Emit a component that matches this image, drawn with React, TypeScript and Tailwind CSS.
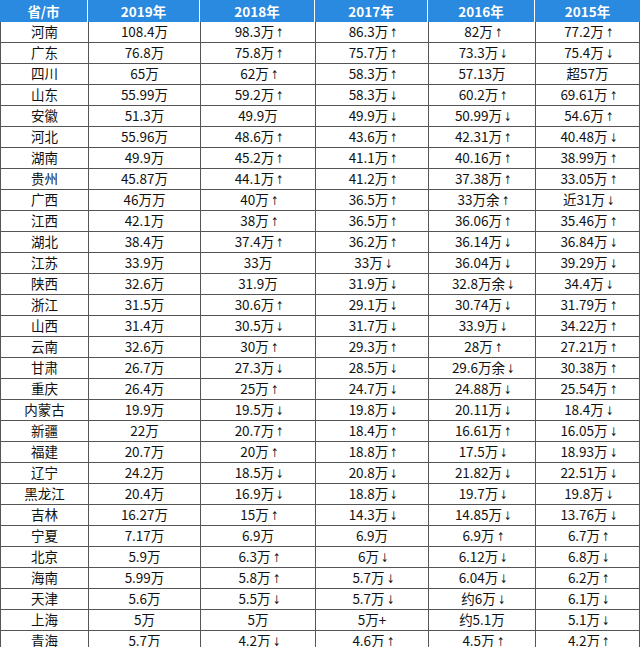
import React from "react";

const years = ["2019年", "2018年", "2017年", "2016年", "2015年"];

const rows: string[][] = [
  ["河南", "108.4万", "98.3万↑", "86.3万↑", "82万↑", "77.2万↑"],
  ["广东", "76.8万", "75.8万↑", "75.7万↑", "73.3万↓", "75.4万↓"],
  ["四川", "65万", "62万↑", "58.3万↑", "57.13万", "超57万"],
  ["山东", "55.99万", "59.2万↑", "58.3万↓", "60.2万↑", "69.61万↑"],
  ["安徽", "51.3万", "49.9万", "49.9万↓", "50.99万↓", "54.6万↑"],
  ["河北", "55.96万", "48.6万↑", "43.6万↑", "42.31万↑", "40.48万↓"],
  ["湖南", "49.9万", "45.2万↑", "41.1万↑", "40.16万↑", "38.99万↑"],
  ["贵州", "45.87万", "44.1万↑", "41.2万↑", "37.38万↑", "33.05万↑"],
  ["广西", "46万万", "40万↑", "36.5万↑", "33万余↑", "近31万↓"],
  ["江西", "42.1万", "38万↑", "36.5万↑", "36.06万↑", "35.46万↑"],
  ["湖北", "38.4万", "37.4万↑", "36.2万↑", "36.14万↓", "36.84万↓"],
  ["江苏", "33.9万", "33万", "33万↓", "36.04万↓", "39.29万↓"],
  ["陕西", "32.6万", "31.9万", "31.9万↓", "32.8万余↓", "34.4万↓"],
  ["浙江", "31.5万", "30.6万↑", "29.1万↓", "30.74万↓", "31.79万↑"],
  ["山西", "31.4万", "30.5万↓", "31.7万↓", "33.9万↓", "34.22万↑"],
  ["云南", "32.6万", "30万↑", "29.3万↑", "28万↑", "27.21万↑"],
  ["甘肃", "26.7万", "27.3万↓", "28.5万↓", "29.6万余↓", "30.38万↑"],
  ["重庆", "26.4万", "25万↑", "24.7万↓", "24.88万↓", "25.54万↑"],
  ["内蒙古", "19.9万", "19.5万↓", "19.8万↓", "20.11万↓", "18.4万↓"],
  ["新疆", "22万", "20.7万↑", "18.4万↑", "16.61万↑", "16.05万↓"],
  ["福建", "20.7万", "20万↑", "18.8万↑", "17.5万↓", "18.93万↓"],
  ["辽宁", "24.2万", "18.5万↓", "20.8万↓", "21.82万↓", "22.51万↓"],
  ["黑龙江", "20.4万", "16.9万↓", "18.8万↓", "19.7万↓", "19.8万↓"],
  ["吉林", "16.27万", "15万↑", "14.3万↓", "14.85万↓", "13.76万↓"],
  ["宁夏", "7.17万", "6.9万", "6.9万", "6.9万↑", "6.7万↑"],
  ["北京", "5.9万", "6.3万↑", "6万↓", "6.12万↓", "6.8万↓"],
  ["海南", "5.99万", "5.8万↑", "5.7万↓", "6.04万↓", "6.2万↑"],
  ["天津", "5.6万", "5.5万↓", "5.7万↓", "约6万↓", "6.1万↓"],
  ["上海", "5万", "5万", "5万+", "约5.1万", "5.1万↓"],
  ["青海", "5.7万", "4.2万↓", "4.6万↑", "4.5万↑", "4.2万↑"],
];

const grid = "grid grid-cols-[88px_112px_115px_113px_107px_105px]";

// arrows in the source are narrow, so set them in a thinner font
function Cell({ text }: { text: string }) {
  const last = text.slice(-1);
  if (last === "↑" || last === "↓") {
    return (
      <span>
        {text.slice(0, -1)}
        <span className="font-['DejaVu_Sans'] text-[12px] inline-block w-[6px] ml-[1px] scale-x-75">{last}</span>
      </span>
    );
  }
  return <span>{text}</span>;
}

export default function App() {
  return (
    <div className="w-[640px] h-[647px] overflow-hidden bg-white font-['Noto_Sans_CJK_SC','Microsoft_YaHei',sans-serif]">
      <div className={`${grid} h-[22px] bg-[#2a8ae0] text-white text-[13.5px] font-bold`}>
        <div className="flex items-center justify-center border-r border-white">省/市</div>
        {years.map((y) => (
          <div key={y} className="flex items-center justify-center border-r border-white last:border-r-0">
            {y}
          </div>
        ))}
      </div>
      {rows.map((r) => (
        <div key={r[0]} className={`${grid} h-[21px] text-[13.5px] text-[#111] border-b border-[#555]`}>
          {r.map((c, i) => (
            <div
              key={i}
              className={`flex items-center justify-center leading-none border-l border-[#555] ${i === 5 ? "border-r" : ""}`}
            >
              <Cell text={c} />
            </div>
          ))}
        </div>
      ))}
    </div>
  );
}
